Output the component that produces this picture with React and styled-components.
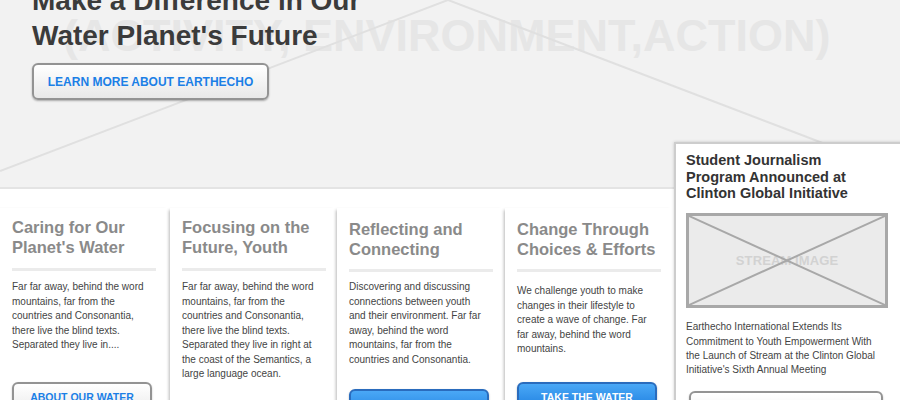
import React from "react";
import styled, { createGlobalStyle, css } from "styled-components";

const Global = createGlobalStyle`
  html, body { margin: 0; padding: 0; background: #fff; }
  body { font-family: "Liberation Sans", Arial, Helvetica, sans-serif; }
  * { box-sizing: border-box; }
`;

const Page = styled.div`
  width: 900px;
  height: 400px;
  overflow: hidden;
  background: #fff;
`;

const Hero = styled.section`
  position: relative;
  display: flow-root;
  height: 189px;
  background: #f2f2f2;
  border-bottom: 2px solid #e4e4e4;
`;

const HeroArt = styled.svg`
  position: absolute;
  left: 0;
  top: 0;
  width: 900px;
  height: 187px;
  pointer-events: none;
`;

const Watermark = styled.div`
  position: absolute;
  left: 63px;
  top: 13px;
  font-size: 45px;
  line-height: 1;
  font-weight: 700;
  color: #e6e6e6;
  white-space: nowrap;
`;

const HeroInner = styled.div`
  position: relative;
  padding-left: 32px;
  margin-top: -17px;
`;

const HeroTitle = styled.h1`
  margin: 0;
  font-size: 28px;
  line-height: 35px;
  font-weight: 700;
  color: #3b3b3b;
`;

const buttonBase = css`
  display: flex;
  align-items: center;
  justify-content: center;
  border-radius: 6px;
  border: 2px solid #939393;
  font-weight: 700;
  text-transform: uppercase;
  font-family: inherit;
  white-space: nowrap;
`;

const HeroButton = styled.button`
  ${buttonBase};
  margin-top: 10px;
  width: 237px;
  height: 37px;
  padding: 0;
  font-size: 12px;
  color: #1b7fe6;
  background: linear-gradient(#ffffff, #e8e8e8);
  box-shadow: 0 1px 2px rgba(0, 0, 0, 0.3);
`;

const Cards = styled.div`
  display: grid;
  grid-template-columns: 170px 167px 168px 169px 1fr;
  align-items: start;
  padding-top: 19px;
`;

const Card = styled.article`
  min-height: 200px;
  padding: ${(p) => p.$pt}px 12px 0 12px;
  box-shadow: -3px 0 3px -2px rgba(0, 0, 0, 0.28);
  background: #fff;
`;

const CardTitle = styled.h2`
  margin: 0;
  font-size: 16.5px;
  line-height: 20px;
  font-weight: 700;
  color: #8a8a8a;
`;

const Divider = styled.div`
  margin-top: ${(p) => p.$mt}px;
  width: 144px;
  height: 3px;
  background: #ebebeb;
`;

const CardText = styled.p`
  margin: ${(p) => p.$mt}px 0 0 0;
  width: 140px;
  font-size: 10px;
  line-height: 14.5px;
  color: #444;
`;

const CardButton = styled.button`
  ${buttonBase};
  margin-top: ${(p) => p.$mt}px;
  margin-left: ${(p) => p.$ml || 0}px;
  width: ${(p) => p.$w || 140}px;
  height: 30px;
  padding: 0;
  font-size: 10.5px;
  ${(p) =>
    p.$blue
      ? css`
          color: #fff;
          border-color: #2a6cbd;
          background: linear-gradient(#4aa8f6, #1d7edf);
          box-shadow: 0 1px 2px rgba(0, 0, 0, 0.3);
        `
      : css`
          color: #1b7fe6;
          background: linear-gradient(#ffffff, #ececec);
          box-shadow: 0 1px 2px rgba(0, 0, 0, 0.25);
        `}
`;

const NewsCard = styled.article`
  position: relative;
  z-index: 1;
  margin-top: -66px;
  width: 240px;
  min-height: 280px;
  padding: 8px 10px 0 10px;
  background: #fff;
  border: 2px solid #cdcdcd;
  box-shadow: 0 0 3px rgba(0, 0, 0, 0.18);
`;

const NewsTitle = styled.h3`
  margin: 0;
  width: 185px;
  font-size: 14.5px;
  line-height: 16.7px;
  font-weight: 700;
  color: #333;
`;

const ImageBox = styled.div`
  position: relative;
  margin-top: 11px;
  width: 202px;
  height: 95px;
  border: 3px solid #a8a8a8;
  background: #ebebeb;
  display: flex;
  align-items: center;
  justify-content: center;
`;

const ImageLabel = styled.span`
  font-size: 13px;
  font-weight: 700;
  color: #d2d2d2;
  letter-spacing: 0.1px;
`;

const ImageCross = styled.svg`
  position: absolute;
  left: 0;
  top: 0;
  width: 100%;
  height: 100%;
`;

const NewsText = styled.p`
  margin: 12px 0 0 0;
  width: 198px;
  font-size: 10px;
  line-height: 14.4px;
  color: #444;
`;

const cards = [
  {
    title: "Caring for Our Planet's Water",
    text: "Far far away, behind the word mountains, far from the countries and Consonantia, there live the blind texts. Separated they live in....",
    button: "About our water",
    pt: 9,
    dmt: 11,
    tmt: 9,
    bmt: 29,
  },
  {
    title: "Focusing on the Future, Youth",
    text: "Far far away, behind the word mountains, far from the countries and Consonantia, there live the blind texts. Separated they live in right at the coast of the Semantics, a large language ocean.",
    button: "Our youth",
    pt: 9,
    dmt: 11,
    tmt: 9,
    bmt: 24,
  },
  {
    title: "Reflecting and Connecting",
    text: "Discovering and discussing connections between youth and their environment. Far far away, behind the word mountains, far from the countries and Consonantia.",
    button: "Reflect",
    blue: true,
    pt: 11,
    dmt: 10,
    tmt: 8,
    bmt: 22,
  },
  {
    title: "Change Through Choices & Efforts",
    text: "We challenge youth to make changes in their lifestyle to create a wave of change. Far far away, behind the word mountains.",
    button: "Take the water",
    blue: true,
    pt: 11,
    dmt: 10,
    tmt: 12,
    bmt: 25,
  },
];

export default function App() {
  return (
    <>
      <Global />
      <Page>
        <Hero>
          <Watermark>(ACTIVITY, ENVIRONMENT,ACTION)</Watermark>
          <HeroArt viewBox="0 0 900 187">
            <line x1="0" y1="171" x2="896" y2="-171" stroke="#e0e0e0" strokeWidth="2" />
            <line x1="0" y1="-171" x2="896" y2="171" stroke="#e0e0e0" strokeWidth="2" />
          </HeroArt>
          <HeroInner>
            <HeroTitle>
              Make a Difference in Our
              <br />
              Water Planet's Future
            </HeroTitle>
            <HeroButton>Learn more about Earthecho</HeroButton>
          </HeroInner>
        </Hero>
        <Cards>
          {cards.map((c) => (
            <Card key={c.title} $pt={c.pt}>
              <CardTitle>{c.title}</CardTitle>
              <Divider $mt={c.dmt} />
              <CardText $mt={c.tmt}>{c.text}</CardText>
              <CardButton $mt={c.bmt} $blue={c.blue}>
                {c.button}
              </CardButton>
            </Card>
          ))}
          <NewsCard>
            <NewsTitle>Student Journalism Program Announced at Clinton Global Initiative</NewsTitle>
            <ImageBox>
              <ImageLabel>STREAM IMAGE</ImageLabel>
              <ImageCross viewBox="0 0 100 100" preserveAspectRatio="none">
                <line x1="0" y1="0" x2="100" y2="100" stroke="#a8a8a8" strokeWidth="2" vectorEffect="non-scaling-stroke" />
                <line x1="0" y1="100" x2="100" y2="0" stroke="#a8a8a8" strokeWidth="2" vectorEffect="non-scaling-stroke" />
              </ImageCross>
            </ImageBox>
            <NewsText>
              Earthecho International Extends Its Commitment to Youth Empowerment With the Launch of Stream at the Clinton Global Initiative's Sixth Annual Meeting
            </NewsText>
            <CardButton $mt={13} $w={194} $ml={3}>
              Read more
            </CardButton>
          </NewsCard>
        </Cards>
      </Page>
    </>
  );
}
